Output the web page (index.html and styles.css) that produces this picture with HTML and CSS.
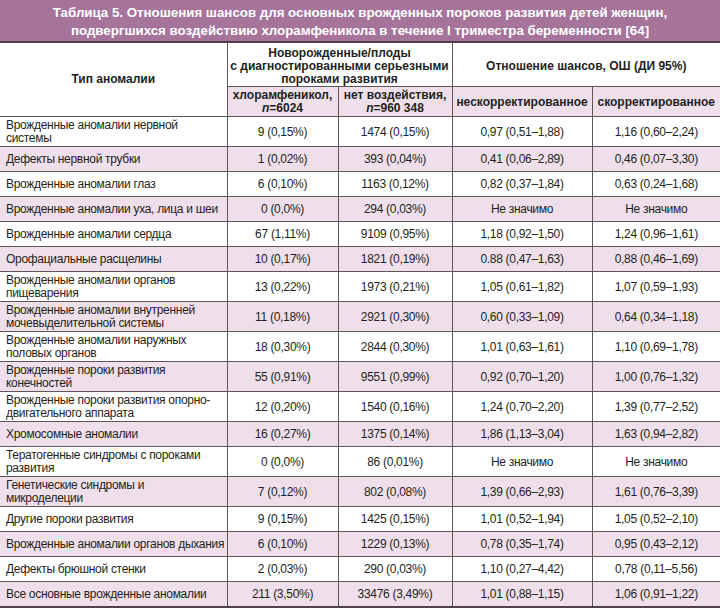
FILE: index.html
```html
<!DOCTYPE html>
<html lang="ru">
<head>
<meta charset="utf-8">
<title>Таблица 5</title>
<link rel="stylesheet" href="styles.css">
</head>
<body>
<div class="sheet">
  <div class="title">Таблица 5. Отношения шансов для основных врожденных пороков развития детей женщин,<br>подвергшихся воздействию хлорамфеникола в течение I триместра беременности [64]</div>
  <table class="grid">
    <colgroup>
      <col class="c1"><col class="c2"><col class="c3"><col class="c4"><col class="c5">
    </colgroup>
    <thead>
      <tr class="h1">
        <th rowspan="2" class="type">Тип аномалии</th>
        <th colspan="2">Новорожденные/плоды<br>с диагностированными серьезными<br>пороками развития</th>
        <th colspan="2">Отношение шансов, ОШ (ДИ 95%)</th>
      </tr>
      <tr class="h2">
        <th>хлорамфеникол,<br><i>n</i>=6024</th>
        <th>нет воздействия,<br><i>n</i>=960 348</th>
        <th>нескорректированное</th>
        <th>скорректированное</th>
      </tr>
    </thead>
    <tbody>
      <tr><td>Врожденные аномалии нервной<br>системы</td><td>9 (0,15%)</td><td>1474 (0,15%)</td><td>0,97 (0,51–1,88)</td><td>1,16 (0,60–2,24)</td></tr>
      <tr><td>Дефекты нервной трубки</td><td>1 (0,02%)</td><td>393 (0,04%)</td><td>0,41 (0,06–2,89)</td><td>0,46 (0,07–3,30)</td></tr>
      <tr><td>Врожденные аномалии глаз</td><td>6 (0,10%)</td><td>1163 (0,12%)</td><td>0,82 (0,37–1,84)</td><td>0,63 (0,24–1,68)</td></tr>
      <tr><td>Врожденные аномалии уха, лица и шеи</td><td>0 (0,0%)</td><td>294 (0,03%)</td><td>Не значимо</td><td>Не значимо</td></tr>
      <tr><td>Врожденные аномалии сердца</td><td>67 (1,11%)</td><td>9109 (0,95%)</td><td>1,18 (0,92–1,50)</td><td>1,24 (0,96–1,61)</td></tr>
      <tr><td>Орофациальные расщелины</td><td>10 (0,17%)</td><td>1821 (0,19%)</td><td>0.88 (0,47–1,63)</td><td>0,88 (0,46–1,69)</td></tr>
      <tr><td>Врожденные аномалии органов<br>пищеварения</td><td>13 (0,22%)</td><td>1973 (0,21%)</td><td>1,05 (0,61–1,82)</td><td>1,07 (0,59–1,93)</td></tr>
      <tr><td>Врожденные аномалии внутренней<br>мочевыделительной системы</td><td>11 (0,18%)</td><td>2921 (0,30%)</td><td>0,60 (0,33–1,09)</td><td>0,64 (0,34–1,18)</td></tr>
      <tr><td>Врожденные аномалии наружных<br>половых органов</td><td>18 (0,30%)</td><td>2844 (0,30%)</td><td>1,01 (0,63–1,61)</td><td>1,10 (0,69–1,78)</td></tr>
      <tr><td>Врожденные пороки развития<br>конечностей</td><td>55 (0,91%)</td><td>9551 (0,99%)</td><td>0,92 (0,70–1,20)</td><td>1,00 (0,76–1,32)</td></tr>
      <tr><td>Врожденные пороки развития опорно-<br>двигательного аппарата</td><td>12 (0,20%)</td><td>1540 (0,16%)</td><td>1,24 (0,70–2,20)</td><td>1,39 (0,77–2,52)</td></tr>
      <tr><td>Хромосомные аномалии</td><td>16 (0,27%)</td><td>1375 (0,14%)</td><td>1,86 (1,13–3,04)</td><td>1,63 (0,94–2,82)</td></tr>
      <tr><td>Тератогенные синдромы с пороками<br>развития</td><td>0 (0,0%)</td><td>86 (0,01%)</td><td>Не значимо</td><td>Не значимо</td></tr>
      <tr><td>Генетические синдромы и<br>микроделеции</td><td>7 (0,12%)</td><td>802 (0,08%)</td><td>1,39 (0,66–2,93)</td><td>1,61 (0,76–3,39)</td></tr>
      <tr><td>Другие пороки развития</td><td>9 (0,15%)</td><td>1425 (0,15%)</td><td>1,01 (0,52–1,94)</td><td>1,05 (0,52–2,10)</td></tr>
      <tr><td>Врожденные аномалии органов дыхания</td><td>6 (0,10%)</td><td>1229 (0,13%)</td><td>0,78 (0,35–1,74)</td><td>0,95 (0,43–2,12)</td></tr>
      <tr><td>Дефекты брюшной стенки</td><td>2 (0,03%)</td><td>290 (0,03%)</td><td>1,10 (0,27–4,42)</td><td>0,78 (0,11–5,56)</td></tr>
      <tr><td>Все основные врожденные аномалии</td><td>211 (3,50%)</td><td>33476 (3,49%)</td><td>1,01 (0,88–1,15)</td><td>1,06 (0,91–1,22)</td></tr>
    </tbody>
  </table>
</div>
</body>
</html>
```

FILE: styles.css
```css
html, body {
  margin: 0;
  padding: 0;
  background: #ffffff;
}

.sheet {
  width: 720px;
  font-family: "Liberation Sans", Arial, sans-serif;
  color: #231f20;
}

.title {
  background: #a6739a;
  color: #ffffff;
  font-weight: bold;
  font-size: 13.3px;
  line-height: 18px;
  text-align: center;
  height: 43px;
  box-sizing: border-box;
  padding-top: 4px;
  border-bottom: 2px solid #4e4348;
}

.grid {
  width: 720px;
  border-collapse: collapse;
  table-layout: fixed;
  font-size: 12px;
  letter-spacing: -0.3px;
  border-bottom: 2px solid #4e4348;
}

.c1 { width: 227px; }
.c2 { width: 111px; }
.c3 { width: 114px; }
.c4 { width: 140px; }
.c5 { width: 128px; }

.grid th,
.grid td {
  border: 1px solid #5e5557;
  line-height: 13px;
  vertical-align: middle;
  text-align: center;
  white-space: nowrap;
}

.grid tr > :first-child { border-left: none; }
.grid tr > :last-child { border-right: none; }
.grid thead tr:first-child th { border-top: none; }

.grid th {
  font-weight: bold;
  letter-spacing: 0;
  padding: 1px 2px;
}

.grid .h1 th {
  height: 38px;
  padding-top: 4px;
  padding-bottom: 0;
}
.grid .h1 th.type {
  background: #ffffff;
  padding-top: 1px;
  padding-bottom: 1px;
}
.grid .h2 th {
  height: 26px;
  background: #eedfea;
  padding-top: 2px;
  padding-bottom: 1px;
}

.grid td {
  padding: 2px 4px 1px;
  height: 21px;
}

.grid td:first-child {
  text-align: left;
  padding-left: 6px;
}

.grid tbody tr:nth-child(even) td { background: #eedfea; }
```
